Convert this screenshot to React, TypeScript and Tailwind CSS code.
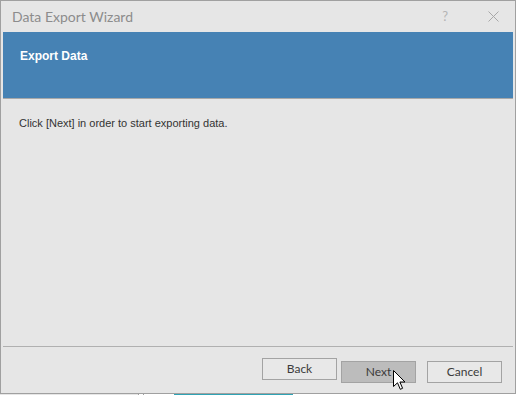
import * as React from "react";

function Cursor() {
  return (
    <svg width="13" height="20" viewBox="0 0 13 20" className="absolute left-[393px] top-[370px]">
      <path
        d="M0.5 0.5 L0.5 16.5 L4.5 12.8 L7.3 19.3 L9.6 18.3 L6.9 12 L12 12 Z"
        fill="#ffffff"
        stroke="#000000"
        strokeWidth="1"
        strokeLinejoin="miter"
      />
    </svg>
  );
}

function WizardButton(props: { label: string; active?: boolean }) {
  return (
    <button
      className={
        props.active
          ? "w-[75px] h-[22px] border border-[#a3a3a3] bg-[#bcbcbc] text-[12px] text-[#3b3b3b] leading-none"
          : "w-[75px] h-[22px] border border-[#a3a3a3] bg-[#e8e8e8] text-[12px] text-[#3b3b3b] leading-none"
      }
    >
      {props.label}
    </button>
  );
}

export default function App(): React.ReactElement {
  return (
    <div className="relative w-[517px] h-[395px] bg-white overflow-hidden font-['Lato',sans-serif]">
      <div className="flex w-[516px] h-[394px] flex-col border border-[#a0a0a0] bg-[#e6e6e6]">
        {/* title bar */}
        <div className="flex h-[31px] items-center pl-[11px] pr-[16px]">
          <span className="text-[14px] text-[#8c8c8c]">Data Export Wizard</span>
          <span className="ml-auto mr-[40px] text-[13px] text-[#b4b4b4]">?</span>
          <svg width="11" height="11" viewBox="0 0 11 11">
            <path d="M0.5 0.5 L10.5 10.5 M10.5 0.5 L0.5 10.5" stroke="#a8a8a8" strokeWidth="1" />
          </svg>
        </div>

        {/* header */}
        <div className="mx-[2px] h-[67px] border-b border-[#a8a8a8] bg-[#4682b4] px-[17px] pt-[15px]">
          <div className="text-[12px] font-bold text-white font-['Liberation_Sans',sans-serif]">Export Data</div>
        </div>

        {/* body */}
        <div className="flex-1 px-[18px] pt-[16px]">
          <p className="text-[11px] text-[#333333] font-['Liberation_Sans',sans-serif]">
            Click [Next] in order to start exporting data.
          </p>
        </div>

        {/* footer */}
        <div className="mx-[2px] h-[47px] border-t border-[#b0b0b0]">
          <div className="flex pl-[259px] pt-[11px]">
            <WizardButton label="Back" />
            <div className="ml-[4px]">
              <WizardButton label="Next" active />
            </div>
            <div className="ml-[11px]">
              <WizardButton label="Cancel" />
            </div>
          </div>
        </div>
      </div>

      {/* strip below the window */}
      <div className="flex h-[1px]">
        <div className="w-[138px] bg-[#e6e6e6]" />
        <div className="w-[1px] bg-[#a0a0a0]" />
        <div className="w-[4px]" />
        <div className="w-[1px] bg-[#a0a0a0]" />
        <div className="w-[30px]" />
        <div className="w-[119px] bg-[#2fa3b5]" />
      </div>

      <Cursor />
    </div>
  );
}
